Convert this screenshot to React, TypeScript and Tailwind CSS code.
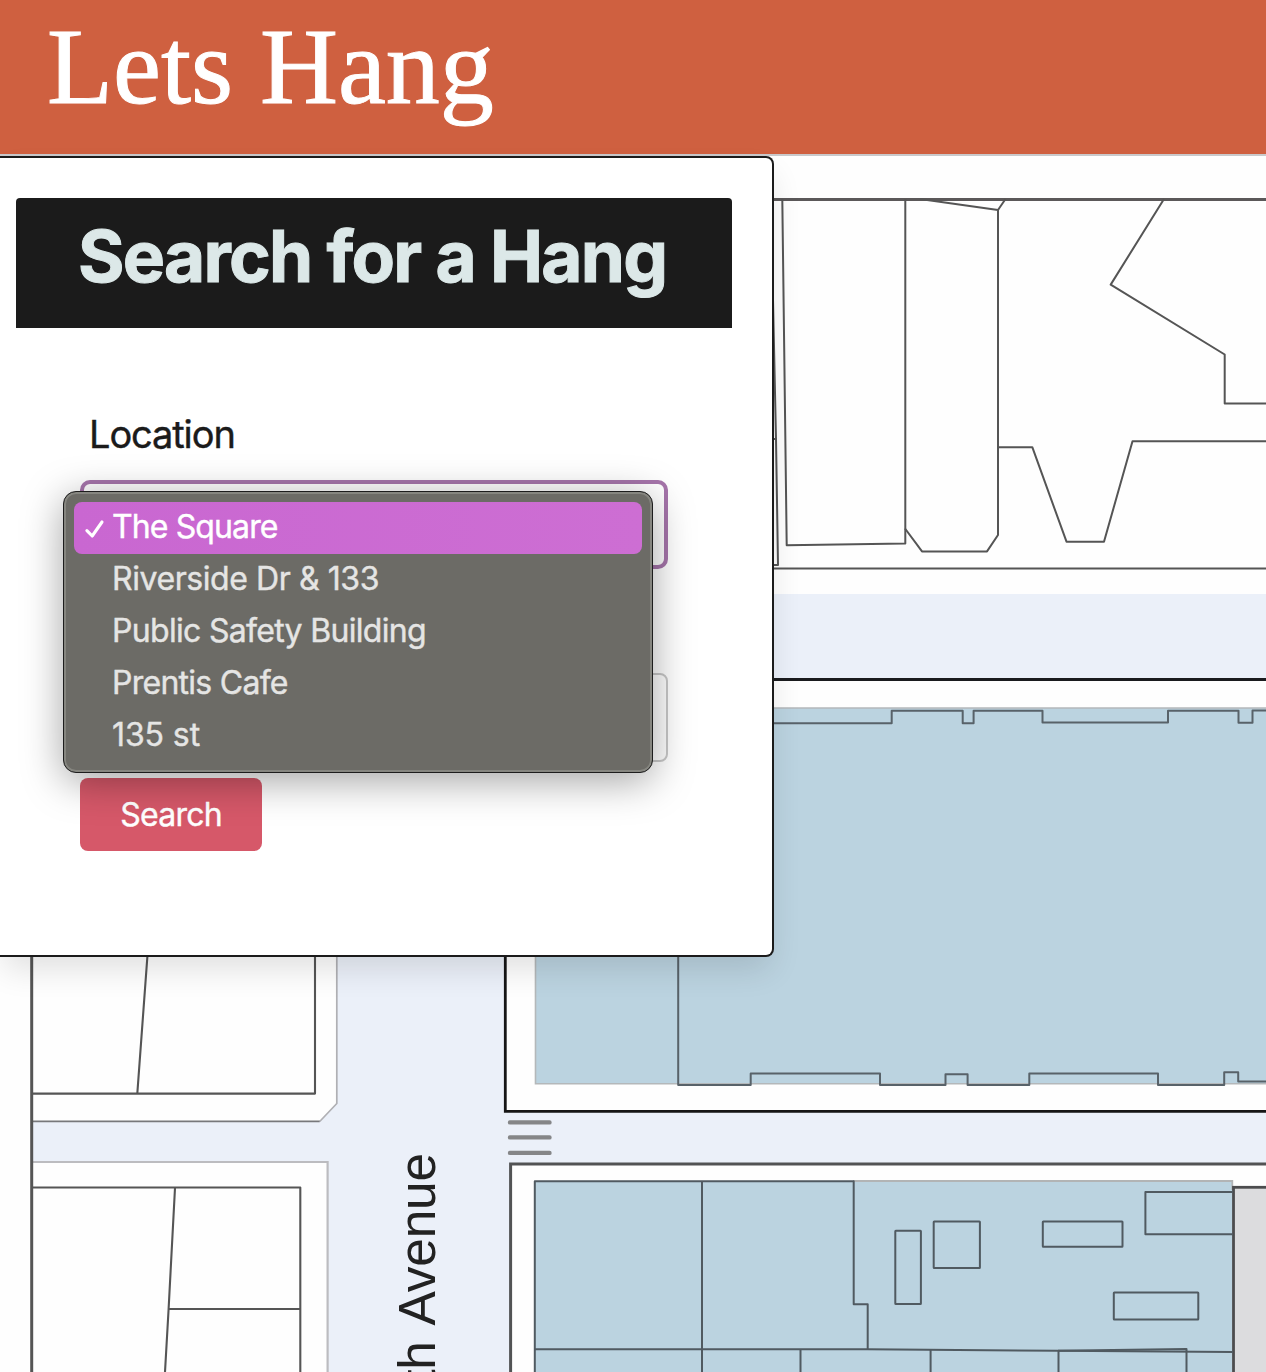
const OPTIONS = [
  { label: 'The Square', tracking: 'tracking-[-0.88px]' },
  { label: 'Riverside Dr & 133', tracking: 'tracking-[-0.42px]' },
  { label: 'Public Safety Building', tracking: 'tracking-[-0.69px]' },
  { label: 'Prentis Cafe', tracking: 'tracking-[-0.73px]' },
  { label: '135 st', tracking: 'tracking-[-0.1px]' },
];

function StreetMap() {
  return (
    <svg className="absolute inset-0 block h-full w-full" viewBox="0 156 1266 1216" fill="none">
      <rect x="0" y="156" width="1266" height="1216" fill="#fefefe" />

      {/* Block north of the cross street */}
      <g stroke="#555" strokeWidth="2" strokeLinejoin="round">
        <path d="M760 199.5H1266" stroke="#5b5859" strokeWidth="3.2" />
        <path d="M782.3 199L786.7 545.3L905.3 543.6V199" />
        <path d="M905 528.5L922 551.4H987L998 535V210L920 199" />
        <path d="M998 210L1005.5 199" />
        <path d="M1164 199L1110.7 284.6L1224.7 354.5V403.5H1266" />
        <path d="M998 447.2H1032.3L1066.5 541.7H1104L1132.5 441.3H1266" />
        <path d="M773 300L776 439L778 565H772M772 439H777" />
        <path d="M760 568.4H1266" />
      </g>

      {/* Streets */}
      <rect x="760" y="594" width="506" height="86" fill="#ebf0f9" />
      <path d="M31 940H505V1112H1266V1164H511V1372H31Z" fill="#ebf0f9" />

      {/* Central block */}
      <path d="M505.5 940V1111.4H1266V679.6H505.5Z" fill="#fefefe" />
      <path d="M760 679.6H1266" stroke="#1a1b1e" strokeWidth="3" />
      <path d="M505.3 940V1111.4H1266" stroke="#161616" strokeWidth="2.8" />
      <path d="M535.5 700V1083.7H1280V708H535.5Z" fill="#bbd3e0" stroke="#b4b8ba" strokeWidth="1.6" />
      <g stroke="#586269" strokeWidth="2" strokeLinejoin="round">
        <path d="M760 723.3H891.7V710.7H962.7V723.3H973.6V710.7H1042.5V722.5H1168V710.7H1238.5V722.7H1252.5V710.5H1266" />
        <path d="M678.2 940V1085H750.7V1073.4H880V1085H945.5V1074.3H967.6V1085H1029.3V1073.4H1158V1085H1224.2V1072.3H1238.2V1081.4H1266" />
      </g>
      <path d="M510 1122.4H549.5M510 1137.4H549.5M510 1152.9H549.5" stroke="#858688" strokeWidth="4.4" strokeLinecap="round" />

      {/* South-east block */}
      <path d="M510.6 1390V1164H1280V1390Z" fill="#fefefe" stroke="#525354" strokeWidth="3" />
      <path d="M534.8 1181.2H1232.3V1390H534.8Z" fill="#bbd3e0" />
      <path d="M853 1181H1232.3V1190" stroke="#b2b4b5" strokeWidth="1.8" />
      <rect x="1233.5" y="1187.3" width="50" height="200" fill="#dcdcde" stroke="#4c4c4e" strokeWidth="2.8" />
      <g stroke="#505a61" strokeWidth="2" strokeLinejoin="round">
        <path d="M534.8 1372V1181.2H853.7V1304.3H867.7V1349" />
        <path d="M702 1181V1372" />
        <path d="M534.8 1349.3H867L1058 1350.7L1186.5 1349V1372" />
        <path d="M1058 1350.7L1233 1352" />
        <path d="M800.5 1350V1372M930.6 1350V1372M1058.5 1350V1372" />
        <rect x="895.3" y="1230.7" width="25.6" height="73.4" rx="0.5" />
        <rect x="933.7" y="1221.5" width="46.2" height="46.4" rx="0.5" />
        <rect x="1042.8" y="1221.5" width="79.7" height="25.2" rx="0.5" />
        <path d="M1233 1192H1145.4V1234.3H1233" />
        <rect x="1113.8" y="1292.5" width="84.5" height="27" rx="0.5" />
      </g>

      {/* Western blocks */}
      <path d="M31 940H336.8V1103.5L319.7 1121.5H31Z" fill="#fefefe" />
      <path d="M336.8 940V1103.5L319.7 1121.5" stroke="#b0b0b4" strokeWidth="1.7" />
      <path d="M31 1121.4H319.7" stroke="#77787b" strokeWidth="1.6" />
      <path d="M31 1162H327.6V1372H31Z" fill="#fefefe" />
      <path d="M31 1162H327.6V1372" stroke="#bcbcc0" strokeWidth="2.2" />
      <g stroke="#555" strokeWidth="2.1" strokeLinejoin="round">
        <path d="M31 1093.6H315V940M148.6 940L137.3 1093.6" />
        <path d="M31 1187.5H300.3V1372M175 1188L168.6 1309L165 1372M168.6 1309H300.3" />
        <path d="M31.7 940V1372" strokeWidth="3" />
      </g>

      <text
        transform="translate(434.5 1153) rotate(-90)"
        textAnchor="end"
        fill="#222"
        fontSize="51.5"
        letterSpacing="-0.2"
        wordSpacing="4.5"
        fontFamily='"Liberation Sans", sans-serif'
      >
        th Avenue
      </text>
    </svg>
  );
}

function CheckMark() {
  return (
    <svg className="ml-[10px] mt-[5px] h-[22px] w-[21px] shrink-0" viewBox="0 0 21 22" fill="none">
      <path d="M2.9 12.6L8.2 18L18 4" stroke="#fff" strokeWidth="3.1" strokeLinecap="round" strokeLinejoin="round" />
    </svg>
  );
}

function LocationMenu() {
  return (
    <ul className="absolute -left-[17px] top-[11px] z-10 w-[590px] rounded-[13px] border border-[#1d1d1d] bg-[#6c6b66] p-[10px] shadow-[inset_0_0_0_2px_#868680,0_8px_40px_rgba(0,0,0,0.36)]">
      {OPTIONS.map((option, i) => (
        <li
          key={option.label}
          className={
            i === 0
              ? 'flex h-[52px] items-center rounded-lg bg-gradient-to-r from-[#c967d1] to-[#cd6ed3] pb-[3px] text-white'
              : 'flex h-[52px] items-center pb-[3px] text-[#e5e5e4]'
          }
        >
          <span className="flex w-[38px] shrink-0">{i === 0 && <CheckMark />}</span>
          <span
            className={`whitespace-nowrap text-[32px] leading-[40px] [-webkit-text-stroke:0.4px_currentColor] ${option.tracking}`}
          >
            {option.label}
          </span>
        </li>
      ))}
    </ul>
  );
}

export default function App() {
  return (
    <div className="flex h-[1372px] w-[1266px] flex-col overflow-hidden bg-[#fefefe] font-[Inter,sans-serif]">
      <header className="h-[156px] shrink-0 border-b-2 border-[#c9c9cb] bg-[#cf6040] pl-[47px]">
        <h1 className="whitespace-nowrap font-['Liberation_Serif',serif] text-[108px] leading-[133px] text-white [-webkit-text-stroke:1px_white]">
          Lets Hang
        </h1>
      </header>

      <main className="relative flex-1">
        <StreetMap />
        <section className="relative h-[801px] w-[774px] rounded-r-lg border-2 border-l-0 border-[#1b1b1b] bg-white pl-4 pt-10 shadow-[0_16px_32px_-4px_rgba(10,10,10,0.12)]">
          <div className="h-[130px] w-[716px] rounded-t bg-[#1b1b1b] pl-[62px] pt-[22px]">
            <h2 className="whitespace-nowrap text-[71px] font-bold leading-[73px] tracking-[-1.75px] text-[#dce8e8] [-webkit-text-stroke:1px_#dce8e8]">
              Search for a Hang
            </h2>
          </div>

          <form className="ml-16 mt-[86px] w-[588px]">
            <label className="block pl-[9px] text-[38px] leading-[41px] tracking-[-1.1px] text-[#1b1b1b] [-webkit-text-stroke:0.4px_currentColor]">
              Location
            </label>
            <div className="relative mt-[25px] h-[89px]">
              <div className="h-[89px] rounded-[10px] border-4 border-[#a675ab] bg-white" />
              <LocationMenu />
            </div>
            <div className="mt-[104px] h-[89px] rounded-lg border-2 border-[#c8c8c8] bg-white" />
            <button
              type="button"
              className="mt-4 flex h-[73px] w-[182px] items-center justify-center rounded-lg bg-[#d65869] text-[32px] leading-[40px] tracking-[-0.75px] text-white [-webkit-text-stroke:0.4px_currentColor]"
            >
              Search
            </button>
          </form>
        </section>
      </main>
    </div>
  );
}
